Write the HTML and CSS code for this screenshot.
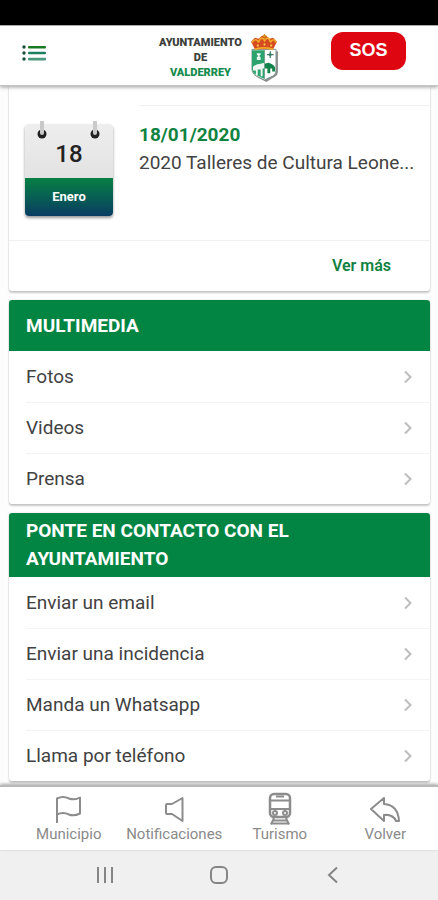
FILE: index.html
```html
<!DOCTYPE html>
<html lang="es">
<head>
<meta charset="utf-8">
<meta name="viewport" content="width=device-width, initial-scale=1">
<title>Ayuntamiento de Valderrey</title>
<link rel="stylesheet" href="styles.css">
</head>
<body>
<div class="status-bar"></div>
<header class="top-bar">
  <button class="icon-button" type="button" aria-label="Menú">
    <svg width="25" height="18" viewBox="0 0 25 18">
      <g fill="#174f38"><circle cx="2" cy="3" r="1.7"/><circle cx="2" cy="9" r="1.7"/><circle cx="2" cy="15" r="1.7"/></g>
      <rect x="6" y="2" width="18" height="2.4" rx="1" fill="#177a20"/>
      <rect x="6" y="7.800" width="18" height="2.400" rx="1" fill="#1c8060"/>
      <rect x="6" y="13.800" width="18" height="2.600" rx="1" fill="#4b997c"/>
    </svg>
  </button>
  <div class="brand">
    <p class="brand-name">AYUNTAMIENTO<br>DE<br><span class="brand-place">VALDERREY</span></p>
    <svg class="crest" width="29" height="48" viewBox="0 0 30 50">
      <path d="M5 18h24v21q0 5-6 7l-6 4-6-3q-5-2-6-6z" fill="#8d8d8d"/>
      <path d="M2 16h25v22q0 5-6 7l-6 3-6-3q-6-2-7-7z" fill="#fff" stroke="#78928a"/>
      <path d="M2 17h13v30l-6-3q-6-2-7-7z" fill="#2ba36f"/>
      <path d="M7 20h4v2h-1v2h1v3H7v-3h1v-2H7z" fill="#e6f5ed"/>
      <path d="M3 34q4-3 8-3l4-1v6h-2v8h-2v-7H8v6H6v-5H3z" fill="#eef7f2"/>
      <path d="M15 31l4-1q5 1 7 5v4h-3v-3h-2v5h-3v-5h-3z" fill="#12824b"/>
      <path d="M15 17v30" stroke="#73a58f"/>
      <path d="M21 18v7M17.500 21.500h7" stroke="#397c66" stroke-width="1.300"/>
      <circle cx="21" cy="21.500" r="1.500" fill="#397c66"/>
      <path d="M5 16L1 8l4-4 4 1 3-3h5l3 3 4-1 4 4-4 8z" fill="#d64a20"/>
      <path d="M2 9q4-6 7 0M9 8q3-7 6-1 4-6 6 1M21 9q4-6 6 0M5 16q9-3 19 0" fill="none" stroke="#f0a928" stroke-width="1.800"/>
      <path d="M15 0v6M13 2h4" stroke="#d98b1c" stroke-width="1.500"/>
      <path d="M7 12h2M14 11h2M21 12h2" stroke="#f6cb45" stroke-width="2"/>
    </svg>
  </div>
  <button class="sos" type="button">SOS</button>
</header>

<main class="content">
  <section class="card agenda">
    <div class="previous-event"></div>
    <article class="event">
      <div class="calendar">
        <svg class="rings" viewBox="0 0 88 20" width="88" height="20">
          <circle cx="17" cy="13" r="4.500" fill="#202020"/><path d="M17 1v11" stroke="#c9c9c9" stroke-width="4" stroke-linecap="round"/>
          <circle cx="70" cy="13" r="4.500" fill="#202020"/><path d="M70 1v11" stroke="#c9c9c9" stroke-width="4" stroke-linecap="round"/>
        </svg>
        <span class="day">18</span>
        <span class="month">Enero</span>
      </div>
      <div class="event-text">
        <h3>18/01/2020</h3>
        <p>2020 Talleres de Cultura Leone...</p>
      </div>
    </article>
    <div class="card-footer"><a href="#agenda">Ver más</a></div>
  </section>

  <section class="card">
    <h2>MULTIMEDIA</h2>
    <nav class="rows">
      <a href="#fotos">Fotos<svg class="chevron" viewBox="0 0 10 14"><path d="M2 1.500L7.500 7 2 12.500"/></svg></a>
      <a href="#videos">Videos<svg class="chevron" viewBox="0 0 10 14"><path d="M2 1.500L7.500 7 2 12.500"/></svg></a>
      <a href="#prensa">Prensa<svg class="chevron" viewBox="0 0 10 14"><path d="M2 1.500L7.500 7 2 12.500"/></svg></a>
    </nav>
  </section>

  <section class="card">
    <h2>PONTE EN CONTACTO CON EL AYUNTAMIENTO</h2>
    <nav class="rows">
      <a href="#email">Enviar un email<svg class="chevron" viewBox="0 0 10 14"><path d="M2 1.500L7.500 7 2 12.500"/></svg></a>
      <a href="#incidencia">Enviar una incidencia<svg class="chevron" viewBox="0 0 10 14"><path d="M2 1.500L7.500 7 2 12.500"/></svg></a>
      <a href="#whatsapp">Manda un Whatsapp<svg class="chevron" viewBox="0 0 10 14"><path d="M2 1.500L7.500 7 2 12.500"/></svg></a>
      <a href="#telefono">Llama por teléfono<svg class="chevron" viewBox="0 0 10 14"><path d="M2 1.500L7.500 7 2 12.500"/></svg></a>
    </nav>
  </section>
</main>

<nav class="tabs">
  <a href="#municipio">
    <svg width="32" height="34" viewBox="0 0 32 34"><path d="M4 31V6.500q6-3 12 0 6 2 11-1v16q-6 3-11 1-6-3-12 0"/></svg>
    Municipio
  </a>
  <a href="#notificaciones">
    <svg width="32" height="34" viewBox="0 0 32 34"><path d="M9 12h5L24.500 6v23L14 22H9q-1 0-1-1v-8q0-1 1-1z"/></svg>
    Notificaciones
  </a>
  <a href="#turismo">
    <svg width="32" height="34" viewBox="0 0 32 34"><rect x="6" y="2" width="20" height="23" rx="4" stroke-width="2.500"/><path d="M12 4.500h8M7 8.500h18M7 17h18M10 26L7 32.500M22 26l3 6.500M9 28.500h14M7 31.500h18"/><circle cx="11" cy="21" r="2"/><circle cx="21" cy="21" r="2"/></svg>
    Turismo
  </a>
  <a href="#volver">
    <svg width="32" height="34" viewBox="0 0 32 34"><path d="M2 17L15 6v6q14 1 15 17h-3q-3-7-12-6v6z"/></svg>
    Volver
  </a>
</nav>
<div class="system-nav">
  <button type="button" aria-label="Recientes"><svg width="20" height="20" viewBox="0 0 20 20"><path d="M3 2v16M10 2v16M17 2v16"/></svg></button>
  <button type="button" aria-label="Inicio"><svg width="20" height="20" viewBox="0 0 20 20"><rect x="2" y="2" width="16" height="16" rx="5"/></svg></button>
  <button type="button" aria-label="Atrás"><svg width="20" height="20" viewBox="0 0 20 20"><path d="M14 2.500L6 10l8 7.500"/></svg></button>
</div>
</body>
</html>
```
FILE: styles.css
```css
* { box-sizing: border-box; }

body {
  display: flex;
  flex-direction: column;
  height: 100vh;
  margin: 0;
  overflow: hidden;
  background: #fdfdfd;
  color: #424242;
  font-family: Roboto, "Liberation Sans", sans-serif;
  font-size: 19px;
  line-height: 28px;
}

h2, h3, p { margin: 0; }
a { color: inherit; text-decoration: none; }
button { padding: 0; border: 0; background: none; font: inherit; }
svg { display: block; flex: none; }

.status-bar { flex: none; height: 25px; background: #000; }

.top-bar {
  z-index: 1;
  display: grid;
  grid-template-columns: 1fr auto 1fr;
  align-items: center;
  flex: none;
  height: 61px;
  padding: 0 32px 0 22px;
  border-top: 1px solid #aaa;
  border-bottom: 1px solid #c4c4c4;
  background: #fff;
  box-shadow: 0 1px 4px #0006;
}
.icon-button { justify-self: start; margin-bottom: 6px; }
.brand { display: flex; align-items: center; gap: 8px; margin-left: 10px; padding-top: 4px; }
.brand-name {
  color: #3c413b;
  font-size: 11px;
  font-weight: 900;
  line-height: 15px;
  text-align: center;
}
.brand-place { color: #168b4d; }
.sos {
  justify-self: end;
  width: 75px;
  height: 38px;
  margin-bottom: 10px;
  padding-bottom: 2px;
  border-radius: 12px;
  background: #de0611;
  color: #fff;
  font-family: "Liberation Sans", sans-serif;
  font-size: 18px;
  font-weight: 700;
}

.content {
  display: flex;
  flex: 1;
  flex-direction: column;
  gap: 9px;
  min-height: 0;
  padding: 0 8px 0 9px;
  overflow: hidden;
}
.card {
  flex: none;
  overflow: hidden;
  border-radius: 3px;
  background: #fff;
  box-shadow: 0 2px 2px #0003, 0 0 2px #0002;
}
.agenda { border-radius: 0 0 3px 3px; }
.previous-event { height: 20px; margin-left: 130px; border-bottom: 1px solid #f0f0f0; }
.event {
  display: flex;
  gap: 26px;
  height: 134px;
  padding: 15px 16px;
}
.calendar {
  position: relative;
  display: flex;
  flex: none;
  flex-direction: column;
  width: 88px;
  height: 92px;
  margin-top: 3px;
  border-radius: 4px;
  background: linear-gradient(#eee, #dadada);
  box-shadow: 0 2px 3px #0006;
  text-align: center;
}
.rings { position: absolute; top: -3px; left: 0; }
.day {
  flex: 1;
  padding-top: 16px;
  color: #222;
  font-size: 24px;
  font-weight: 500;
}
.month {
  height: 38px;
  border-radius: 0 0 4px 4px;
  background: linear-gradient(#078044, #093d62);
  color: #fff;
  font-size: 13px;
  font-weight: 700;
  line-height: 38px;
}
.event-text { min-width: 0; white-space: nowrap; }
.event h3 { color: #108341; font-size: 19px; font-weight: 700; }
.card-footer {
  height: 51px;
  padding: 0 39px;
  border-top: 1px solid #f0f0f0;
  color: #108341;
  font-size: 16px;
  font-weight: 600;
  line-height: 50px;
  text-align: right;
}

.card h2 {
  display: flex;
  align-items: center;
  min-height: 51px;
  padding: 4px 100px 4px 17px;
  background: #028543;
  color: #fff;
  font-size: 19px;
  font-weight: 700;
}
.rows a {
  display: flex;
  align-items: center;
  justify-content: space-between;
  height: 51px;
  margin-left: 17px;
  padding-right: 17px;
}
.rows a + a { border-top: 1px solid #f4f4f4; }
.chevron { width: 10px; height: 14px; fill: none; stroke: #bdbdbd; stroke-width: 2; }

.tabs {
  z-index: 1;
  display: grid;
  grid-template-columns: repeat(4, 1fr);
  flex: none;
  height: 65px;
  padding: 0 0 0 16px;
  border-top: 2px solid #b8b8b8;
  background: #fff;
  box-shadow: 0 -1px 3px #0005;
  color: #8a8a8a;
  font-size: 15px;
  line-height: 16px;
}
.tabs a { display: flex; flex-direction: column; align-items: center; padding-top: 5px; }
.tabs svg { fill: none; stroke: #8c8c8c; stroke-width: 2; stroke-linejoin: round; }

.system-nav {
  display: flex;
  align-items: center;
  justify-content: center;
  gap: 94px;
  flex: none;
  height: 50px;
  background: #f0f0f0;
}
.system-nav svg { fill: none; stroke: #858585; stroke-width: 2; }
```
